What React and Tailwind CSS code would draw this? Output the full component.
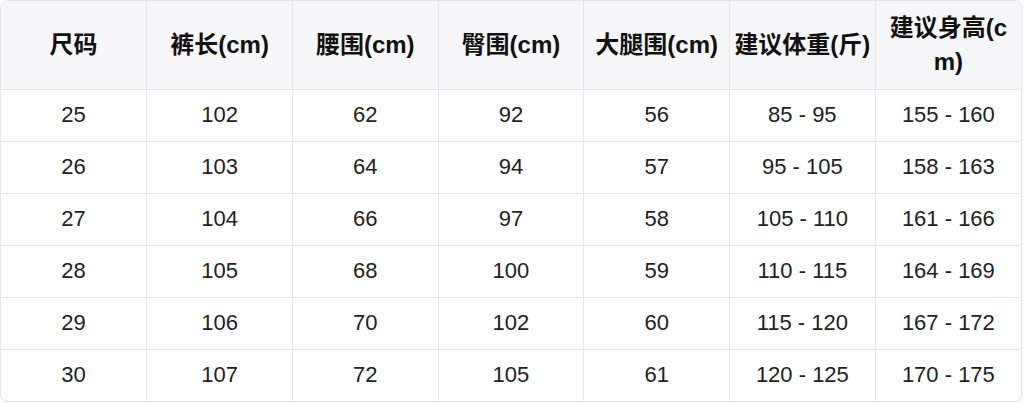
const headers = ["尺码", "裤长(cm)", "腰围(cm)", "臀围(cm)", "大腿围(cm)", "建议体重(斤)", "建议身高(cm)"];

const rows = [
  ["25", "102", "62", "92", "56", "85 - 95", "155 - 160"],
  ["26", "103", "64", "94", "57", "95 - 105", "158 - 163"],
  ["27", "104", "66", "97", "58", "105 - 110", "161 - 166"],
  ["28", "105", "68", "100", "59", "110 - 115", "164 - 169"],
  ["29", "106", "70", "102", "60", "115 - 120", "167 - 172"],
  ["30", "107", "72", "105", "61", "120 - 125", "170 - 175"],
];

export default function App() {
  return (
    <div className="bg-white w-[1024px] h-[403px] pr-[2px] pb-[2px] font-['Liberation_Sans','Noto_Sans_CJK_SC',sans-serif]">
      <div className="rounded-lg border border-[#e6e6ea] overflow-hidden shadow-[0_1px_2px_rgba(0,0,0,0.06)]">
        <table className="w-full table-fixed border-collapse">
          <thead>
            <tr className="bg-[#f7f7f9]">
              {headers.map((h, i) => (
                <th
                  key={h}
                  className={`h-[88px] px-1 text-[24px] leading-[34px] font-bold text-[#111] text-center break-all ${i > 0 ? "border-l border-[#e6e6ea]" : ""}`}
                >
                  {h}
                </th>
              ))}
            </tr>
          </thead>
          <tbody>
            {rows.map((r) => (
              <tr key={r[0]} className="border-t border-[#e6e6ea]">
                {r.map((c, i) => (
                  <td
                    key={i}
                    className={`h-[52px] px-1 text-[22px] leading-8 text-[#222] text-center ${i > 0 ? "border-l border-[#e6e6ea]" : ""}`}
                  >
                    {c}
                  </td>
                ))}
              </tr>
            ))}
          </tbody>
        </table>
      </div>
    </div>
  );
}
